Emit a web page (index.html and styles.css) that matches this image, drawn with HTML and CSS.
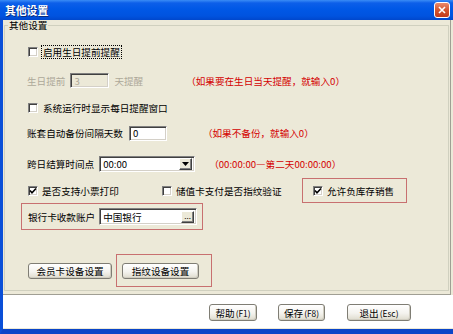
FILE: index.html
```html
<!DOCTYPE html>
<html lang="zh">
  <head>
    <meta charset="UTF-8" />
    <title>其他设置</title>
    <link rel="stylesheet" href="styles.css">
  </head>
  <body>
    <div class="window">
      <div class="titlebar">
        <span class="title">其他设置</span>
        <span class="close">
          <svg width="8" height="8" viewBox="0 0 8 8"><path d="M1 1L7 7M7 1L1 7" stroke="#fff" stroke-width="1.6" /></svg>
        </span>
      </div>

      <div class="panel">
        <fieldset class="group">
          <legend>其他设置</legend>
          <div class="group-body">
            <div class="row r1">
              <span class="check"></span>
              <span class="focus">启用生日提前提醒</span>
            </div>

            <div class="row r2">
              <span class="muted">生日提前</span>
              <span class="field disabled days">3</span>
              <span class="muted after">天提醒</span>
              <span class="hint hint-birthday">（如果要在生日当天提醒，就输入0）</span>
            </div>

            <div class="row r3">
              <span class="check"></span>
              <span class="label-check">系统运行时显示每日提醒窗口</span>
            </div>

            <div class="row r4">
              <span>账套自动备份间隔天数</span>
              <span class="field backup">0</span>
              <span class="hint hint-backup">（如果不备份，就输入0）</span>
            </div>

            <div class="row r5">
              <span>跨日结算时间点</span>
              <span class="field select">
                <span class="select-text">00:00</span>
                <span class="drop">
                  <svg width="7" height="4" viewBox="0 0 7 4"><path d="M0 0H7L3.5 4Z" fill="#000" /></svg>
                </span>
              </span>
              <span class="hint hint-time">（00:00:00—第二天00:00:00）</span>
            </div>

            <div class="row r6">
              <span class="opt opt-ticket">
                <span class="check checked">
                  <svg width="8" height="8" viewBox="0 0 8 8"><path d="M1 3.5L3 5.8L7 1.5" stroke="#000" stroke-width="1.6" fill="none" /></svg>
                </span>
                <span class="label-check">是否支持小票打印</span>
              </span>
              <span class="opt opt-finger">
                <span class="check"></span>
                <span class="label-check">储值卡支付是否指纹验证</span>
              </span>
              <span class="mark mark-stock">
                <span class="check checked">
                  <svg width="8" height="8" viewBox="0 0 8 8"><path d="M1 3.5L3 5.8L7 1.5" stroke="#000" stroke-width="1.6" fill="none" /></svg>
                </span>
                <span class="label-check">允许负库存销售</span>
              </span>
            </div>

            <div class="row r7">
              <span class="mark mark-bank">
                <span>银行卡收款账户</span>
                <span class="field bank">
                  <span class="select-text">中国银行</span>
                  <span class="dots">...</span>
                </span>
              </span>
            </div>

            <div class="row r8">
              <span class="btn btn-member">会员卡设备设置</span>
              <span class="mark mark-finger">
                <span class="btn btn-finger">指纹设备设置</span>
              </span>
            </div>
          </div>
        </fieldset>
      </div>

      <div class="footer">
        <span class="btn btn-help">帮助<small>(F1)</small></span>
        <span class="btn btn-save">保存<small>(F8)</small></span>
        <span class="btn btn-exit">退出<small>(Esc)</small></span>
      </div>
    </div>
  </body>
</html>
```

FILE: styles.css
```css
body {
  margin: 0;
  padding: 0;
  background: #ffffff;
  font-family: "Noto Sans CJK SC", "Noto Sans", sans-serif;
  font-size: 9.6px;
  color: #000;
}

.window {
  width: 453px;
  height: 334px;
  box-sizing: border-box;
  border-left: 3px solid #0a4fd8;
  border-bottom: 5px solid #0a45c8;
  background: #ece9d8;
}

.titlebar {
  height: 20px;
  margin-left: -3px;
  display: flex;
  align-items: center;
  justify-content: space-between;
  padding: 0 3px 0 5px;
  background: linear-gradient(#3a8cf6 0, #0d5fe9 3px, #0058e6 45%, #0053df 80%, #0047cc 100%);
}

.title {
  color: #fff;
  font-weight: bold;
  font-size: 10.8px;
  line-height: 12px;
  text-shadow: 1px 1px 0 #0a2b7a;
}

.close {
  width: 16px;
  height: 16px;
  box-sizing: border-box;
  display: flex;
  align-items: center;
  justify-content: center;
  border: 1px solid #fff;
  border-radius: 3px;
  background: linear-gradient(#ea8a6c, #d4562f 50%, #c23a1b);
}

.panel {
  height: 275px;
  box-sizing: border-box;
  border-bottom: 1px solid #a09f94;
  border-right: 1px solid #a09f94;
  margin-right: 2px;
  padding-top: 0;
}

.group {
  margin: 0 1px 0 1px;
  padding: 0;
  border: 1px solid #d0d0bf;
  min-width: 0;
}

.group legend {
  margin-left: 3px;
  padding: 0 1px;
  line-height: 10px;
  font-size: 9.6px;
}

.group-body {
  padding: 15px 0 3px 22px;
}

.row {
  display: flex;
  align-items: center;
  white-space: nowrap;
  line-height: 12px;
}

.r1 { height: 14px; }
.r2 { height: 15px; margin-top: 14px; }
.r3 { height: 14px; margin-top: 13px; }
.r4 { height: 16px; margin-top: 10px; }
.r5 { height: 16px; margin-top: 15px; }
.r6 { height: 25px; margin-top: 6px; }
.r7 { height: 27px; }
.r8 { height: 33px; margin-top: 24px; }

.check {
  width: 10px;
  height: 10px;
  box-sizing: border-box;
  flex: none;
  display: flex;
  align-items: center;
  justify-content: center;
  background: #fff;
  border: 1px solid;
  border-color: #808080 #ffffff #ffffff #808080;
  box-shadow: inset 1px 1px 0 #404040, inset -1px -1px 0 #d4d0c8;
}

.r1 .check,
.r3 .check,
.opt-ticket .check {
  margin-left: 1px;
}

.focus {
  margin-left: 4px;
  padding: 0 1px;
  outline: 1px dotted #000;
  outline-offset: 0;
}

.label-check {
  margin-left: 4px;
}

.r3 .label-check {
  margin-left: 5px;
}

.muted {
  color: #aca899;
}

.after {
  margin-left: 5px;
}

.hint {
  color: #d40000;
}

.hint-birthday { margin-left: 43px; }
.hint-backup { margin-left: 36px; }
.hint-time { margin-left: 14px; }

.field {
  box-sizing: border-box;
  display: flex;
  align-items: center;
  background: #fff;
  border: 1px solid;
  border-color: #808080 #ffffff #ffffff #808080;
  box-shadow: inset 1px 1px 0 #404040, inset -1px -1px 0 #d4d0c8;
  padding-left: 3px;
}

.field.disabled {
  background: #ece9d8;
  color: #aca899;
}

.days {
  width: 39px;
  height: 15px;
  margin-left: 5px;
}

.backup {
  width: 38px;
  height: 15px;
  margin-left: 6px;
}

.select {
  width: 96px;
  height: 16px;
  margin-left: 5px;
  justify-content: space-between;
  padding-right: 2px;
}

.drop,
.dots {
  width: 13px;
  height: 12px;
  box-sizing: border-box;
  display: flex;
  align-items: center;
  justify-content: center;
  background: #ece9d8;
  border: 1px solid;
  border-color: #ffffff #404040 #404040 #ffffff;
  box-shadow: inset -1px -1px 0 #808080;
}

.dots {
  font-size: 8px;
  line-height: 8px;
  align-items: flex-start;
}

.opt {
  display: flex;
  align-items: center;
}

.opt-ticket { width: 135px; }
.opt-finger { width: 140px; }

.mark {
  box-sizing: border-box;
  display: flex;
  align-items: center;
  border: 1px solid #c87070;
}

.mark-stock {
  width: 105px;
  height: 25px;
  padding-left: 10px;
}

.mark-bank {
  width: 182px;
  height: 27px;
  margin-left: -6px;
  padding-left: 6px;
}

.bank {
  width: 98px;
  height: 17px;
  margin-left: 4px;
  justify-content: space-between;
  padding-right: 2px;
}

.mark-finger {
  width: 96px;
  height: 33px;
  margin-left: 4px;
  padding-left: 5px;
}

.btn {
  box-sizing: border-box;
  display: flex;
  align-items: center;
  justify-content: center;
  height: 16px;
  border: 1px solid #7f7d74;
  border-radius: 3px;
  background: linear-gradient(#ffffff, #f4f3ee 55%, #dedbcd);
  box-shadow: inset -1px -1px 0 #d0cdc0;
}

.btn small {
  font-size: 8.4px;
  margin-left: 1px;
}

.btn-member {
  width: 84px;
  margin-left: 1px;
}

.btn-finger {
  width: 77px;
}

.footer {
  height: 33px;
  box-sizing: border-box;
  display: flex;
  align-items: flex-start;
  padding: 9px 0 0 206px;
  background: #ffffff;
}

.footer .btn {
  height: 17px;
}

.btn-help { width: 48px; }
.btn-save { width: 47px; margin-left: 21px; }
.btn-exit { width: 64px; margin-left: 22px; }
```
